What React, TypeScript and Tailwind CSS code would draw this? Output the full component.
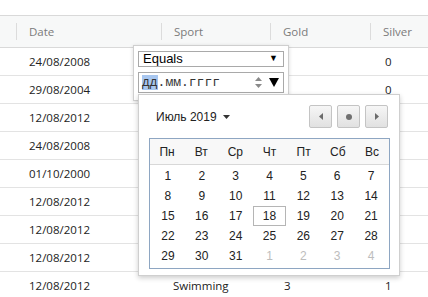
import React from "react";

const rows = [
  { date: "24/08/2008", sport: "", gold: "", silver: "0" },
  { date: "29/08/2004", sport: "", gold: "", silver: "0" },
  { date: "12/08/2012", sport: "", gold: "", silver: "" },
  { date: "24/08/2008", sport: "", gold: "", silver: "" },
  { date: "01/10/2000", sport: "", gold: "", silver: "" },
  { date: "12/08/2012", sport: "", gold: "", silver: "" },
  { date: "12/08/2012", sport: "", gold: "", silver: "" },
  { date: "12/08/2012", sport: "", gold: "", silver: "" },
  { date: "12/08/2012", sport: "Swimming", gold: "3", silver: "1" },
];

const weekdays = ["Пн", "Вт", "Ср", "Чт", "Пт", "Сб", "Вс"];

// July 2019 starts on Monday
const weeks: { d: number; muted?: boolean }[][] = [
  [1, 2, 3, 4, 5, 6, 7].map((d) => ({ d })),
  [8, 9, 10, 11, 12, 13, 14].map((d) => ({ d })),
  [15, 16, 17, 18, 19, 20, 21].map((d) => ({ d })),
  [22, 23, 24, 25, 26, 27, 28].map((d) => ({ d })),
  [
    { d: 29 },
    { d: 30 },
    { d: 31 },
    { d: 1, muted: true },
    { d: 2, muted: true },
    { d: 3, muted: true },
    { d: 4, muted: true },
  ],
];

const HeaderCell = ({ label, w }: { label: string; w: string }) => (
  <div className={`${w} flex items-center h-full`}>
    <span className="w-px h-[17px] bg-[#dcdcdc]" />
    <span className="pl-[12px] text-[#7b7b7b]">{label}</span>
  </div>
);

const NavButton = ({ children }: { children: React.ReactNode }) => (
  <div className="w-[23px] h-[23px] flex items-center justify-center rounded-[2px] border border-[#c4c4c4] bg-gradient-to-b from-[#f6f6f6] to-[#e1e1e1] text-[#6a6a6a]">
    {children}
  </div>
);

export default function App() {
  return (
    <div
      className="relative w-[428px] h-[297px] overflow-hidden bg-white text-[11.5px] text-[#222]"
      style={{ fontFamily: '"Open Sans", "Noto Sans", sans-serif' }}
    >
      <div className="h-[15px]" />

      {/* grid header */}
      <div className="flex h-[33px] border-y border-[#d9d9d9] bg-[#f7f8f8]">
        <div className="w-[16px]" />
        <HeaderCell label="Date" w="w-[145px]" />
        <HeaderCell label="Sport" w="w-[109px]" />
        <HeaderCell label="Gold" w="w-[100px]" />
        <HeaderCell label="Silver" w="flex-1" />
      </div>

      {/* grid rows */}
      {rows.map((r, i) => (
        <div key={i} className="flex h-[28px] items-center border-b border-[#e3e3e3]">
          <div className="w-[16px]" />
          <div className="w-[145px] pl-[13px]">{r.date}</div>
          <div className="w-[109px] pl-[12px]">{r.sport}</div>
          <div className="w-[100px] pl-[14px]">{r.gold}</div>
          <div className="flex-1 pl-[15px]">{r.silver}</div>
        </div>
      ))}

      {/* filter popup */}
      <div className="absolute left-[133px] top-[45px] w-[156px] h-[56px] bg-white border border-[#cfcfcf] shadow-[0_1px_4px_rgba(0,0,0,0.15)] px-[4px] pt-[5px]">
        <div
          className="flex items-center justify-between h-[16px] border border-[#a9a9a9] pl-[4px] pr-[5px] text-[13px] text-black"
          style={{ fontFamily: '"Liberation Sans", Arial, sans-serif' }}
        >
          <span>Equals</span>
          <span className="text-[9px]">▼</span>
        </div>
        <div className="mt-[5px] flex items-center h-[21px] border border-[#a9a9a9] pl-[3px] pr-[4px] text-[13px] text-[#333]">
          <span style={{ fontFamily: '"Liberation Mono", monospace' }}>
            <span className="bg-[#a8c7f0]">дд</span>.мм.гггг
          </span>
          <svg className="ml-auto" width="9" height="13" viewBox="0 0 9 13">
            <path d="M1 5 L4.5 1 L8 5 Z" fill="#8a8a8a" />
            <path d="M1 8 L4.5 12 L8 8 Z" fill="#8a8a8a" />
          </svg>
          <svg className="ml-[6px]" width="10" height="9" viewBox="0 0 10 9">
            <path d="M0 0 L10 0 L5 9 Z" fill="#000" />
          </svg>
        </div>
      </div>

      {/* calendar popup */}
      <div
        className="absolute left-[138px] top-[94px] w-[262px] h-[182px] bg-white border border-[#cfcfcf] shadow-[0_2px_5px_rgba(0,0,0,0.2)] pt-[10px] px-[10px] text-[12px] text-[#222]"
        style={{ fontFamily: '"Liberation Sans", Arial, sans-serif' }}
      >
        <div className="flex items-center h-[23px]">
          <span className="pl-[7px]">Июль 2019</span>
          <svg className="ml-[6px]" width="7" height="4" viewBox="0 0 7 4">
            <path d="M0 0 L7 0 L3.5 4 Z" fill="#333" />
          </svg>
          <div className="ml-auto flex gap-[5px] mr-[1px]">
            <NavButton>
              <svg width="4" height="7" viewBox="0 0 4 7">
                <path d="M4 0 L0 3.5 L4 7 Z" fill="#6a6a6a" />
              </svg>
            </NavButton>
            <NavButton>
              <span className="w-[6px] h-[6px] rounded-full bg-[#707070]" />
            </NavButton>
            <NavButton>
              <svg width="4" height="7" viewBox="0 0 4 7">
                <path d="M0 0 L4 3.5 L0 7 Z" fill="#6a6a6a" />
              </svg>
            </NavButton>
          </div>
        </div>

        <div className="mt-[10px] w-[241px] border border-[#8ea6c2]">
          <div className="grid grid-cols-7 h-[26px] items-center bg-[#f8f8f8] border-b border-[#d8d8d8]">
            {weekdays.map((w) => (
              <div key={w} className="text-center">
                {w}
              </div>
            ))}
          </div>
          <div className="px-[1px] pt-[1px] pb-[2px]">
            {weeks.map((wk, wi) => (
              <div key={wi} className="grid grid-cols-7 h-[20px]">
                {wk.map((c, ci) => (
                  <div
                    key={ci}
                    className={`flex items-center justify-center ${
                      c.muted ? "text-[#bdbdbd]" : "text-[#222]"
                    } ${!c.muted && c.d === 18 ? "border border-[#b5b5b5]" : ""}`}
                  >
                    {c.d}
                  </div>
                ))}
              </div>
            ))}
          </div>
        </div>
      </div>
    </div>
  );
}
